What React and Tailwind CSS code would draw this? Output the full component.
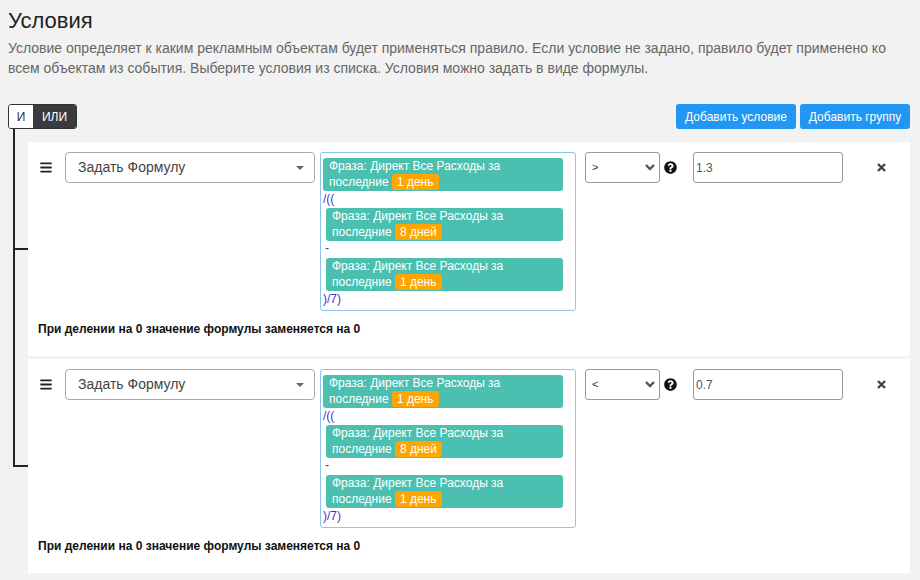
import { FaBars, FaQuestionCircle } from "react-icons/fa";

function Chip({ days, nested }) {
  return (
    <div
      className={`${nested ? "ml-[3px]" : ""} rounded-[3px] bg-[#4bc0b0] pl-[6px] pt-[1px] pb-[1px] text-[12px] leading-[15px] text-white`}
    >
      Фраза: Директ Все Расходы за
      <br />
      последние{" "}
      <span className="inline-block rounded-[3px] bg-[#ffa500] px-[5px] leading-[16px]">
        {days}
      </span>
    </div>
  );
}

function ConditionCard({ op, value }) {
  return (
    <div className="relative bg-white pl-[10px] pt-[10px] pb-[19px]">
      {/* branch of the tree */}
      <div className="absolute -left-[13px] top-1/2 h-[2px] w-[13px] -translate-y-1/2 bg-[#222]" />

      <div className="flex items-start">
        <div className="flex h-[31px] w-[25px] shrink-0 items-center pl-[2px] text-[#222]">
          <FaBars className="h-[13px] w-[12px]" />
        </div>

        <div className="ml-[2px] flex h-[31px] w-[250px] shrink-0 items-center justify-between rounded-[4px] border border-[#aaa] pl-[12px] pr-[10px] text-[14px] text-[#444]">
          <span>Задать Формулу</span>
          <svg width="8" height="4" viewBox="0 0 8 4">
            <path d="M0 0 L8 0 L4 4 Z" fill="#666" />
          </svg>
        </div>

        <div className="ml-[5px] w-[256px] shrink-0 rounded-[3px] border border-[#8ec4f0] pl-[2px] pr-[12px] pt-[5px] pb-[2px] text-[12px]">
          <Chip days="1 день" />
          <div className="h-[17px] leading-[17px] text-[#4a2fd0]">/((</div>
          <Chip days="8 дней" nested />
          <div className="ml-[2px] h-[17px] leading-[15px] text-[#1a3bd6]">-</div>
          <Chip days="1 день" nested />
          <div className="h-[17px] leading-[17px] text-[#4a2fd0]">)/7)</div>
        </div>

        <div className="ml-[9px] flex h-[31px] w-[75px] shrink-0 items-center justify-between rounded-[3px] border border-[#999] pl-[6px] pr-[4px] text-[11px] text-[#333]">
          <span>{op}</span>
          <svg width="10" height="7" viewBox="0 0 10 7">
            <path d="M1 1 L5 5 L9 1" fill="none" stroke="#555" strokeWidth="2.4" />
          </svg>
        </div>

        <div className="flex h-[31px] w-[33px] shrink-0 items-center pl-[4px] text-[#111]">
          <FaQuestionCircle className="h-[13px] w-[13px]" />
        </div>

        <div className="flex h-[31px] w-[150px] shrink-0 items-center rounded-[3px] border border-[#999] pl-[2px] text-[12px] text-[#555]">
          {value}
        </div>

        <div className="flex h-[31px] w-[76px] shrink-0 items-center justify-center">
          <svg width="9" height="9" viewBox="0 0 9 9">
            <path d="M1 1 L8 8 M8 1 L1 8" stroke="#444" strokeWidth="2.4" />
          </svg>
        </div>
      </div>

      <p className="mt-[10px] text-[12px] font-bold leading-4 text-[#111]">
        При делении на 0 значение формулы заменяется на 0
      </p>
    </div>
  );
}

export default function App() {
  return (
    <div className="min-h-screen bg-[#f2f2f2] px-2 pt-[8px] font-['Liberation_Sans',Arial,sans-serif]">
      <h2 className="text-[22px] leading-[26px] text-[#222]">Условия</h2>
      <p className="mt-[4px] text-[14px] leading-5 text-[#666]">
        Условие определяет к каким рекламным объектам будет применяться правило. Если условие не задано, правило будет применено ко всем объектам из события. Выберите условия из списка. Условия можно задать в виде формулы.
      </p>

      <div className="mt-[26px] flex items-center justify-between pr-[2px]">
        <div className="flex h-[25px] overflow-hidden rounded-[3px] border border-[#333] text-[12px]">
          <button className="w-[24px] bg-white text-[#333]">И</button>
          <button className="w-[43px] bg-[#3a3b3f] text-white">ИЛИ</button>
        </div>
        <div className="flex gap-[4px]">
          <button className="h-[25px] w-[120px] rounded-[3px] bg-[#2196f3] text-[12px] text-white">
            Добавить условие
          </button>
          <button className="h-[25px] w-[110px] rounded-[3px] bg-[#2196f3] text-[12px] text-white">
            Добавить группу
          </button>
        </div>
      </div>

      <div className="relative flex flex-col gap-[3px] pl-[20px] pt-[13px] pr-[2px]">
        {/* trunk of the tree */}
        <div className="absolute left-[5px] top-0 bottom-[106px] w-[2px] bg-[#222]" />
        <ConditionCard op=">" value="1.3" />
        <ConditionCard op="<" value="0.7" />
      </div>
    </div>
  );
}
